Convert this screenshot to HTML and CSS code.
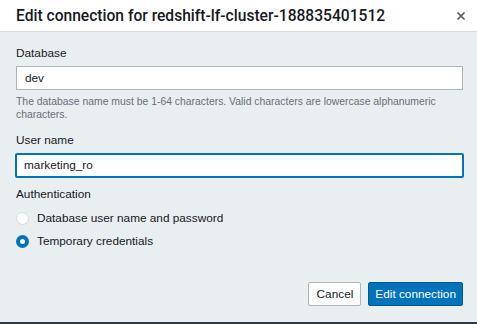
FILE: index.html
```html
<!DOCTYPE html>
<html>
<head>
<meta charset="utf-8">
<link rel="stylesheet" href="styles.css">
</head>
<body>
<div class="modal">
  <div class="header">
    <h2 class="title">Edit connection for redshift-lf-cluster-188835401512</h2>
    <svg class="close" width="10" height="10" viewBox="0 0 10 10"><path d="M1.5 1.5 L8.5 8.5 M8.5 1.5 L1.5 8.5" stroke="#545b64" stroke-width="1.7" fill="none"/></svg>
  </div>
  <div class="body">
    <div class="field">
      <div class="label">Database</div>
      <div class="input">dev</div>
      <div class="hint">The database name must be 1-64 characters. Valid characters are lowercase alphanumeric characters.</div>
    </div>
    <div class="field">
      <div class="label">User name</div>
      <div class="input focused">marketing_ro</div>
    </div>
    <div class="field auth">
      <div class="label">Authentication</div>
      <div class="radios">
        <div class="radio"><span class="dot"></span>Database user name and password</div>
        <div class="radio"><span class="dot checked"></span>Temporary credentials</div>
      </div>
    </div>
    <div class="footer">
      <button class="btn">Cancel</button>
      <button class="btn primary">Edit connection</button>
    </div>
  </div>
</div>
</body>
</html>
```
FILE: styles.css
```css
* { box-sizing: border-box; }
html, body { margin: 0; padding: 0; }
body { font-family: "Liberation Sans", Arial, sans-serif; color: #16191f; background: #e9eef1; }
.modal { width: 477px; height: 324px; display: flex; flex-direction: column; border-bottom: 2px solid #2e3a47; }
.header { height: 32px; background: #fff; border-bottom: 1px solid #d5dbdb; display: flex; align-items: center; justify-content: space-between; padding: 0 11px 0 16px; }
.title { margin: 0; font-family: Roboto, "Liberation Sans", sans-serif; font-size: 15.6px; font-weight: 500; color: #16191f; }
.close { display: block; }
.body { flex: 1; background: #e9eef1; padding: 13px 14px 0 16px; display: flex; flex-direction: column; }
.field { margin-bottom: 11px; }
.field.auth { margin-top: -3px; }
.label { font-size: 11.8px; line-height: 16px; margin-bottom: 5px; color: #16191f; }
.input { height: 24px; background: #fff; border: 1px solid #aab7b8; font-size: 11.8px; line-height: 22px; padding: 0 8px; }
.input.focused { border: 2px solid #0073bb; padding: 0 7px; line-height: 21px; height: 25px; margin-left: -1px; margin-right: -1px; border-radius: 2px; }
.hint { font-size: 10.4px; color: #687078; line-height: 13px; margin-top: 5px; }
.radios { display: flex; flex-direction: column; gap: 6px; margin-top: 8px; }
.radio { display: flex; align-items: center; font-size: 11.8px; line-height: 17px; }
.dot { width: 13px; height: 13px; border-radius: 50%; border: 1px solid #d5dbdb; background: #fff; margin-right: 8px; }
.dot.checked { border: 4px solid #0073bb; }
.footer { margin-top: auto; margin-bottom: 16px; display: flex; justify-content: flex-end; gap: 7px; }
.btn { font-family: inherit; font-size: 11.8px; height: 24px; padding: 0 7px 0 8px; border: 1px solid #aab7b8; background: #fff; color: #16191f; border-radius: 2px; }
.btn.primary { background: #0073bb; border-color: #005a91; color: #fff; padding: 0 6px; }
```
